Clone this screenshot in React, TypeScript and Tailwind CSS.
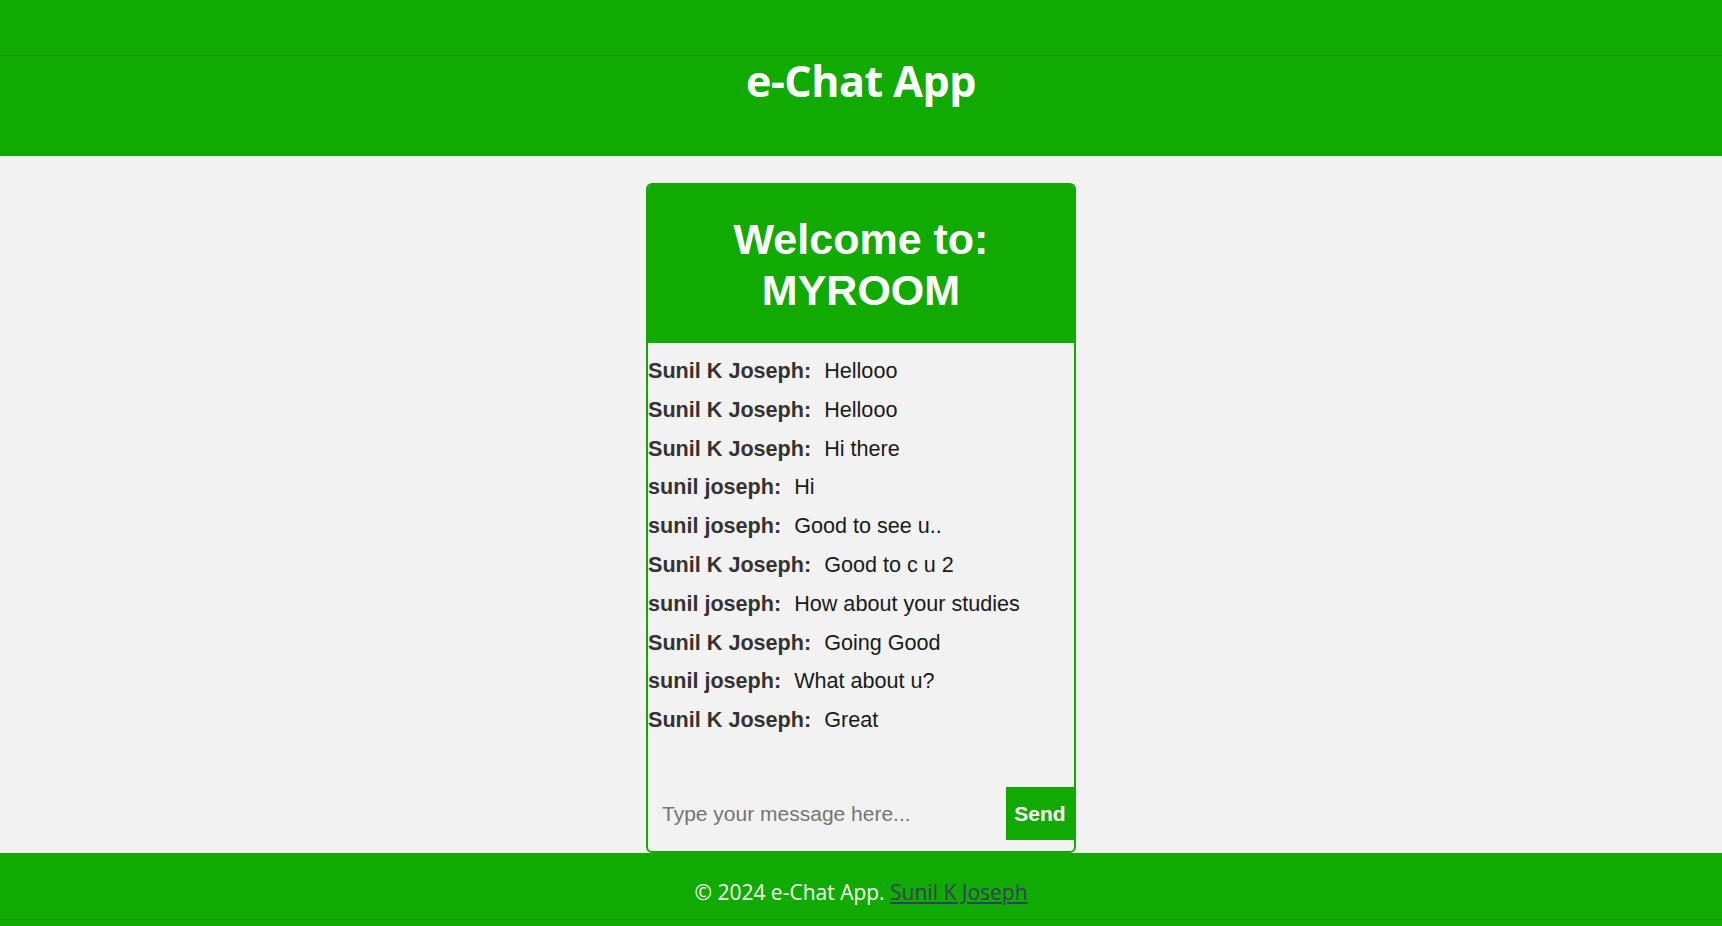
import React from "react";

const messages: { name: string; text: string }[] = [
  { name: "Sunil K Joseph:", text: "Hellooo" },
  { name: "Sunil K Joseph:", text: "Hellooo" },
  { name: "Sunil K Joseph:", text: "Hi there" },
  { name: "sunil joseph:", text: "Hi" },
  { name: "sunil joseph:", text: "Good to see u.." },
  { name: "Sunil K Joseph:", text: "Good to c u 2" },
  { name: "sunil joseph:", text: "How about your studies" },
  { name: "Sunil K Joseph:", text: "Going Good" },
  { name: "sunil joseph:", text: "What about u?" },
  { name: "Sunil K Joseph:", text: "Great" },
];

export default function App() {
  return (
    <div className="min-h-screen bg-[#f2f2f2] flex flex-col">
      <header className="bg-[#10aa00]">
        <div className="h-[56px] border-b border-[#0e9b00]" />
        <div className="h-[100px]">
          <h1 className="text-center text-white font-bold text-[43px] leading-[50px] font-['Open_Sans','Noto_Sans',sans-serif] tracking-[-0.5px]">
            e-Chat App
          </h1>
        </div>
      </header>

      <main className="flex justify-center pt-[27px]">
        <div className="w-[430px] border-2 border-[#10aa00] rounded-[6px] overflow-hidden bg-[#f2f2f2] font-['Liberation_Sans',Arial,sans-serif]">
          <div className="h-[158px] bg-[#10aa00] flex items-center justify-center pt-[2px]">
            <h2 className="text-white font-bold text-[43px] leading-[51px] text-center">
              Welcome to:
              <br />
              MYROOM
            </h2>
          </div>
          <div className="h-[444px] pt-[9px]">
            {messages.map((m, i) => (
              <div key={i} className="text-[21.6px] leading-[38.8px] whitespace-nowrap">
                <span className="font-bold text-[#333333] mr-[13px]">{m.name}</span>
                <span className="text-[#1a1a1a]">{m.text}</span>
              </div>
            ))}
          </div>
          <div className="flex h-[53px]">
            <input
              type="text"
              placeholder="Type your message here..."
              className="flex-1 min-w-0 bg-transparent outline-none pl-[14px] text-[21px] text-[#222] placeholder:text-[#757575]"
            />
            <button className="w-[68px] bg-[#10aa00] text-white font-bold text-[21px]">
              Send
            </button>
          </div>
          <div className="h-[11px]" />
        </div>
      </main>

      <footer className="bg-[#10aa00] font-['Open_Sans','Noto_Sans',sans-serif]">
        <div className="pt-[26px] pb-[14px] border-b border-[#0e9b00] text-center text-[21px] leading-[26px] text-[#f4fff0]">
          © 2024 e-Chat App.{" "}
          <a href="#" className="underline text-[#33405e]">
            Sunil K Joseph
          </a>
        </div>
        <div className="h-[20px]" />
      </footer>
    </div>
  );
}
